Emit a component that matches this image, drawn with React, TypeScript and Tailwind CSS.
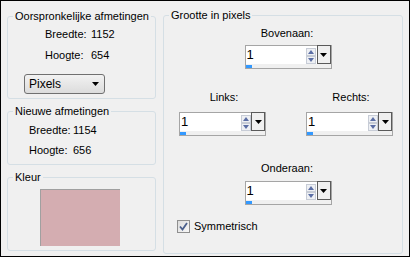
import React from "react";

function Spin({ className = "" }: { className?: string }) {
  return (
    <div className={`w-[87px] h-[24px] border border-[#a5a5a5] bg-[#f0f0f0] flex flex-col ${className}`}>
      <div className="flex h-[18px]">
        <div className="w-[61px] h-[18px] bg-white text-[13px] leading-[18px] pl-[1px] text-black">1</div>
        <div className="w-[11px] h-[18px] bg-white flex flex-col items-center justify-center pt-[1px]">
          <div className="w-[10px] h-[8px] border border-[#c7ccd6] bg-[#eef0f4] flex items-center justify-center">
            <svg width="6" height="4" viewBox="0 0 6 4">
              <path d="M3 0 L6 4 L0 4 Z" fill="#5b6ea5" />
            </svg>
          </div>
          <div className="w-[10px] h-[8px] border border-[#c7ccd6] bg-[#eef0f4] flex items-center justify-center">
            <svg width="6" height="4" viewBox="0 0 6 4">
              <path d="M0 0 L6 0 L3 4 Z" fill="#5b6ea5" />
            </svg>
          </div>
        </div>
        <div className="w-[14px] h-[19px] border border-[#5a5a5a] bg-[#f0f0f0] flex items-center justify-center -mt-[1px]">
          <svg width="7" height="4" viewBox="0 0 7 4">
            <path d="M0 0 L7 0 L3.5 4 Z" fill="#000" />
          </svg>
        </div>
      </div>
      <div className="h-[4px] pt-[1px]">
        <div className="w-[6px] h-[3px] bg-[#3399ff]" />
      </div>
    </div>
  );
}

function Group({
  title,
  className = "",
  children,
}: {
  title: string;
  className?: string;
  children?: React.ReactNode;
}) {
  return (
    <fieldset className={`border border-[#d5dfe5] rounded-[3px] ${className}`}>
      <legend className="ml-[5px] px-[2px] leading-[14px]">{title}</legend>
      {children}
    </fieldset>
  );
}

export default function App() {
  return (
    <div
      className="w-[410px] h-[257px] bg-[#f0f0f0] border border-black text-[11px] text-black flex pl-[6px] pt-[7px]"
      style={{ fontFamily: '"Liberation Sans", Arial, sans-serif' }}
    >
      <div className="w-[149px] flex flex-col">
        <Group title="Oorspronkelijke afmetingen" className="h-[90px] mt-[1px]">
          <div className="flex flex-col pl-[37px] pt-[4px] gap-[7px]">
            <div className="flex leading-[14px]">
              <span className="w-[46px]">Breedte:</span>
              <span>1152</span>
            </div>
            <div className="flex leading-[14px]">
              <span className="w-[46px]">Hoogte:</span>
              <span>654</span>
            </div>
          </div>
          <div className="ml-[16px] mt-[12px] w-[81px] h-[20px] border border-[#707070] rounded-[3px] bg-gradient-to-b from-[#f2f2f2] to-[#dcdcdc] flex items-center justify-between pl-[4px] pr-[5px]">
            <span className="text-[12px] leading-[14px]">Pixels</span>
            <svg width="7" height="4" viewBox="0 0 7 4">
              <path d="M0 0 L7 0 L3.5 4 Z" fill="#000" />
            </svg>
          </div>
        </Group>
        <Group title="Nieuwe afmetingen" className="h-[61px] mt-[5px]">
          <div className="flex flex-col pl-[21px] pt-[5px] gap-[6px]">
            <div className="flex leading-[14px]">
              <span className="w-[44px]">Breedte:</span>
              <span>1154</span>
            </div>
            <div className="flex leading-[14px]">
              <span className="w-[44px]">Hoogte:</span>
              <span>656</span>
            </div>
          </div>
        </Group>
        <Group title="Kleur" className="h-[81px] mt-[5px]">
          <div className="ml-[32px] mt-[5px] w-[80px] h-[57px] bg-[#d4adb1] border-t border-l border-[#a0a0a0]" />
        </Group>
      </div>
      <Group title="Grootte in pixels" className="ml-[7px] w-[240px] h-[246px]">
        <div className="flex flex-col items-center pt-[4px]">
          <span className="leading-[14px] ml-[8px]">Bovenaan:</span>
          <Spin className="mt-[5px] ml-[10px]" />
        </div>
        <div className="flex justify-between pl-[15px] pr-[9px] mt-[21px]">
          <div className="flex flex-col items-center">
            <span className="leading-[14px] ml-[3px]">Links:</span>
            <Spin className="mt-[8px]" />
          </div>
          <div className="flex flex-col items-center">
            <span className="leading-[14px] ml-[3px]">Rechts:</span>
            <Spin className="mt-[8px]" />
          </div>
        </div>
        <div className="flex flex-col items-center mt-[25px]">
          <span className="leading-[14px] ml-[8px]">Onderaan:</span>
          <Spin className="mt-[6px] ml-[10px]" />
        </div>
        <div className="flex items-center ml-[13px] mt-[14px] gap-[4px]">
          <div className="w-[13px] h-[13px] border border-[#8f8f8f] bg-gradient-to-br from-[#dcdcdc] to-[#f8f8f8] flex items-center justify-center">
            <svg width="9" height="9" viewBox="0 0 9 9">
              <path d="M1 4.5 L3.5 7.5 L8 1" stroke="#4a5f8c" strokeWidth="1.8" fill="none" />
            </svg>
          </div>
          <span className="leading-[14px]">Symmetrisch</span>
        </div>
      </Group>
    </div>
  );
}
